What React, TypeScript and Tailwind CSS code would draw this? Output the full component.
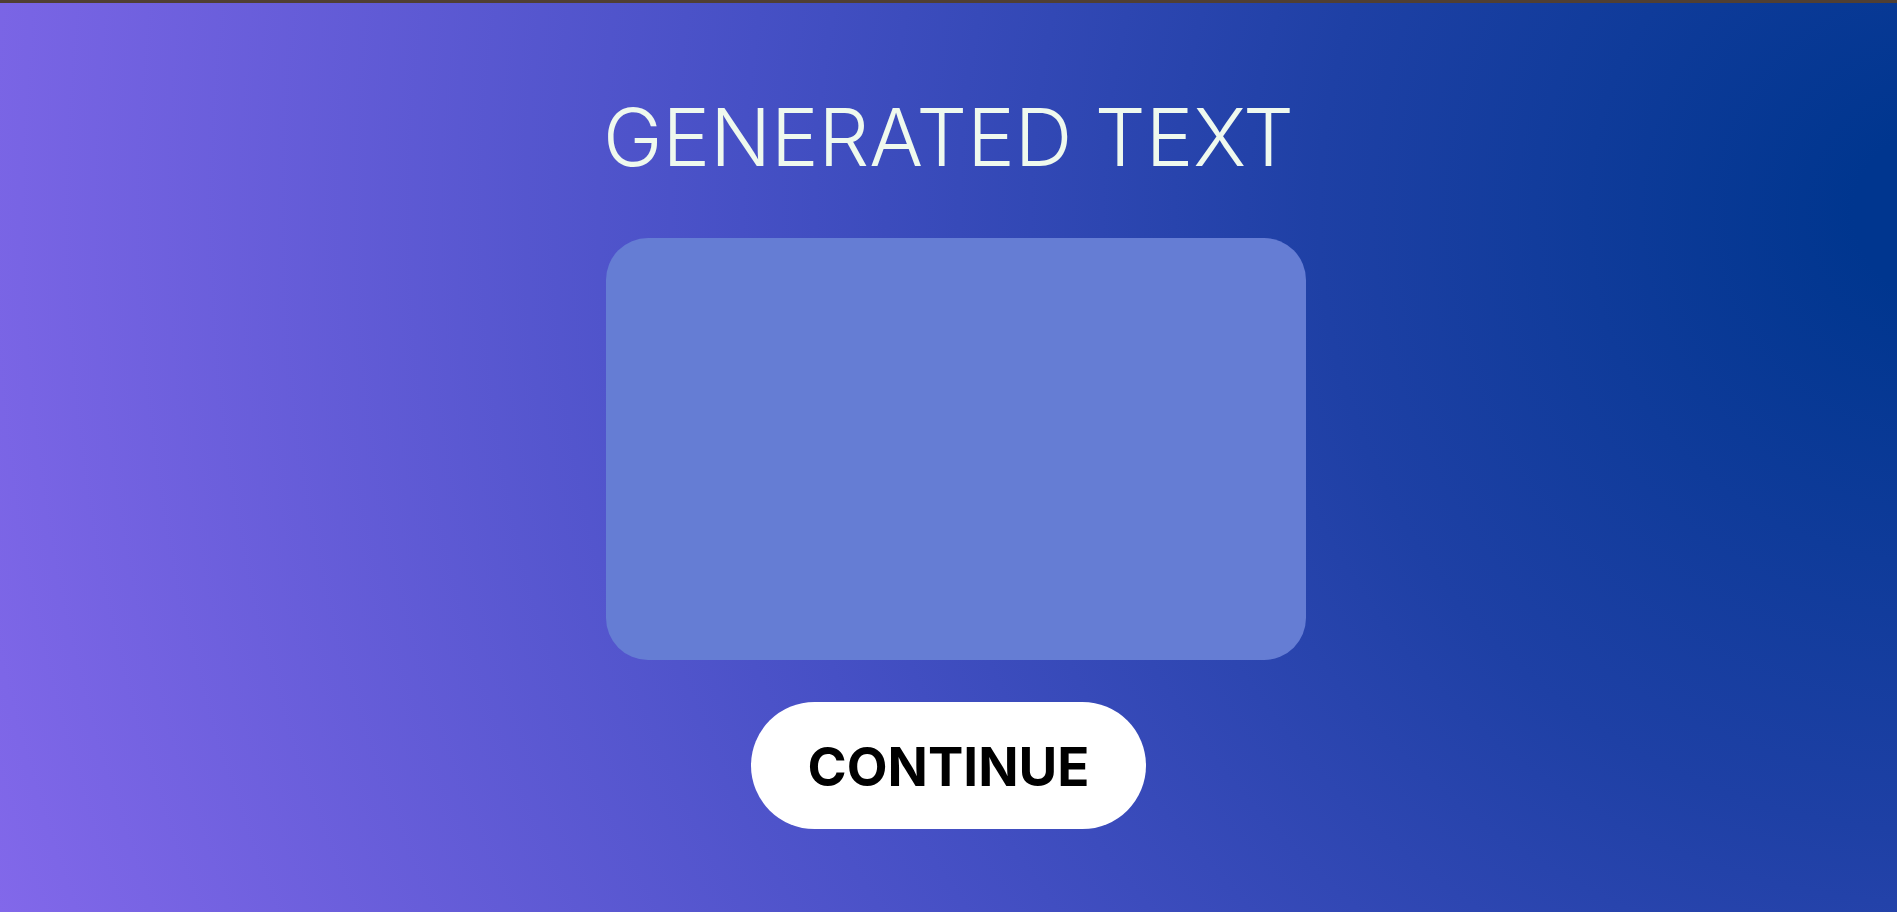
export default function App() {
  return (
    <main className="flex min-h-screen flex-col items-center border-t-3 border-[#503f33] bg-[radial-gradient(circle_2060px_at_calc(100%+40px)_210px,#00368f_0%,#00368f_4%,#1e40a5_30%,#4650c5_58%,#8268ea_100%)] px-6 pt-23 pb-20">
      <h1 className="text-center font-['Inter',sans-serif] text-[80px] leading-21 font-light text-[#eff9ee]">
        GENERATED TEXT
      </h1>
      <section aria-label="Generated text" className="mt-[59px] w-full max-w-[714px] pl-3.5">
        <output className="block min-h-[422px] w-full rounded-[42px] bg-[#657dd4]" />
      </section>
      <button
        type="button"
        className="mt-[42px] rounded-full bg-white px-14 pt-[30px] pb-[26px] font-['Inter',sans-serif] text-[53px] leading-[71px] font-bold text-black"
      >
        CONTINUE
      </button>
    </main>
  );
}
